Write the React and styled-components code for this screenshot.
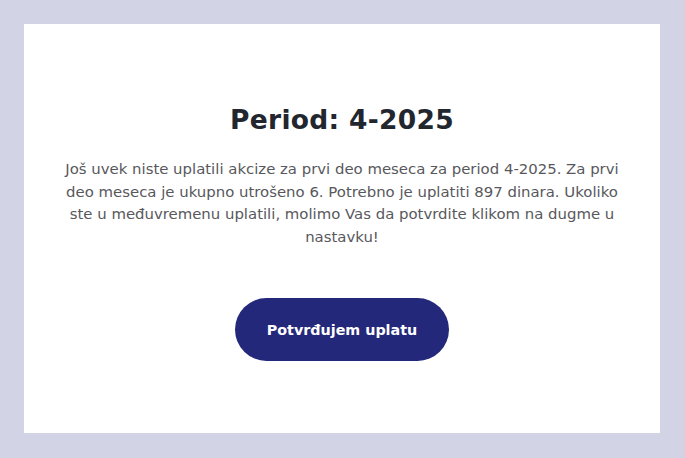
import React from 'react'
import styled, { createGlobalStyle } from 'styled-components'

const GlobalStyle = createGlobalStyle`
  html, body {
    margin: 0;
    padding: 0;
    background: #d3d3e6;
  }
  body {
    font-family: "DejaVu Sans", "Noto Sans", sans-serif;
  }
`

const Page = styled.div`
  width: 685px;
  height: 458px;
  box-sizing: border-box;
  padding: 24px 25px 25px 24px;
`

const Card = styled.div`
  background: #ffffff;
  height: 100%;
  display: flex;
  flex-direction: column;
  align-items: center;
  padding-top: 80px;
  box-sizing: border-box;
`

const Title = styled.h1`
  margin: 0;
  font-size: 26.5px;
  font-weight: 700;
  color: #22262e;
  letter-spacing: 0.3px;
`

const Message = styled.p`
  margin: 23px 0 0;
  width: 572px;
  text-align: center;
  font-size: 14.9px;
  line-height: 22.5px;
  color: #58585c;
`

const ConfirmButton = styled.button`
  margin-top: 50px;
  width: 214px;
  height: 63px;
  border: none;
  border-radius: 32px;
  background: #24287b;
  color: #ffffff;
  font-family: inherit;
  font-size: 14.3px;
  font-weight: 700;
  cursor: pointer;
`

export default function App() {
  return (
    <>
      <GlobalStyle />
      <Page>
        <Card>
          <Title>Period: 4-2025</Title>
          <Message>
            Još uvek niste uplatili akcize za prvi deo meseca za period 4-2025. Za prvi
            deo meseca je ukupno utrošeno 6. Potrebno je uplatiti 897 dinara. Ukoliko
            ste u međuvremenu uplatili, molimo Vas da potvrdite klikom na dugme u
            nastavku!
          </Message>
          <ConfirmButton>Potvrđujem uplatu</ConfirmButton>
        </Card>
      </Page>
    </>
  )
}
